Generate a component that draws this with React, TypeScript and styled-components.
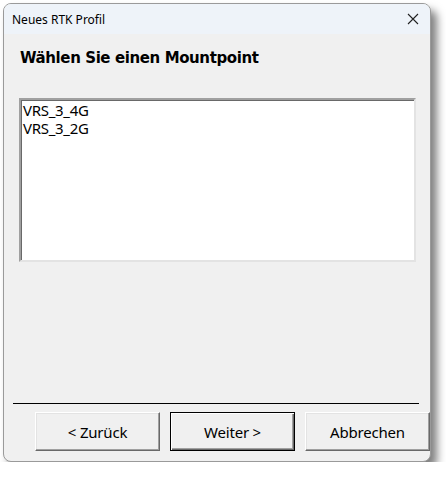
import styled, { createGlobalStyle } from 'styled-components';

const Global = createGlobalStyle`
    html, body {
        margin: 0;
        padding: 0;
        background: #ffffff;
    }
    body {
        padding: 3px 0 0 3px;
    }
`

const Window = styled.div`
    width: 428px;
    height: 459px;
    box-sizing: border-box;
    border: 1px solid #9a9a9a;
    border-radius: 8px;
    background: #f0f0f0;
    box-shadow: 6px 7px 8px rgba(0, 0, 0, 0.5);
    display: flex;
    flex-direction: column;
    overflow: hidden;
`
const Titlebar = styled.div`
    height: 30px;
    flex: none;
    background: #eef3f9;
    display: flex;
    align-items: center;
    justify-content: space-between;
    padding: 0 10px 0 8px;
    font-family: "Noto Sans", "Open Sans", sans-serif;
    font-size: 12px;
    color: #000;
`
const Close = styled.div`
    width: 14px;
    height: 14px;
    display: flex;
    align-items: center;
    justify-content: center;
`
const Content = styled.div`
    flex: 1;
    display: flex;
    flex-direction: column;
`
const Heading = styled.div`
    font-family: "DejaVu Sans", Tahoma, sans-serif;
    font-weight: bold;
    font-size: 15px;
    letter-spacing: -0.4px;
    color: #000;
    margin: 15px 0 0 16px;
    line-height: 18px;
`
const Listbox = styled.div`
    width: 397px;
    height: 164px;
    box-sizing: border-box;
    margin: 31px 0 0 15px;
    background: #fff;
    border-style: solid;
    border-width: 2px;
    border-color: #a0a0a0 #e3e3e3 #e3e3e3 #a0a0a0;
    box-shadow: inset 1px 1px 0 #696969;
    padding: 1px 2px;
    font-family: "Noto Sans", "Open Sans", sans-serif;
    font-size: 15px;
    letter-spacing: -0.3px;
    line-height: 18px;
    color: #000;
`
const Item = styled.div`
    padding-left: 0;
`
const Separator = styled.div`
    height: 1px;
    background: #000;
    margin: 141px 11px 0 9px;
`
const Buttons = styled.div`
    display: flex;
    gap: 10px;
    padding-left: 31px;
    margin-top: 8px;
`
const Button = styled.button<{ $default?: boolean }>`
    width: 125px;
    height: 39px;
    box-sizing: border-box;
    background: #f0f0f0;
    font-family: "Noto Sans", "Open Sans", sans-serif;
    font-size: 15px;
    letter-spacing: -0.2px;
    color: #000;
    padding: 0;
    border: 1px solid;
    border-color: ${p => (p.$default ? '#000' : '#fff #696969 #696969 #fff')};
    box-shadow: ${p => (p.$default
        ? 'inset 1px 1px 0 #fff, inset -1px -1px 0 #696969, inset -2px -2px 0 #a0a0a0'
        : 'inset -1px -1px 0 #a0a0a0, inset 1px 1px 0 #e3e3e3')};
`

export default function App() {
    return (
        <>
            <Global />
            <Window>
                <Titlebar>
                    <span>Neues RTK Profil</span>
                    <Close>
                        <svg width="12" height="12" viewBox="0 0 12 12">
                            <path d="M1 1 L11 11 M11 1 L1 11" stroke="#222" strokeWidth="1.1" />
                        </svg>
                    </Close>
                </Titlebar>
                <Content>
                    <Heading>Wählen Sie einen Mountpoint</Heading>
                    <Listbox>
                        <Item>VRS_3_4G</Item>
                        <Item>VRS_3_2G</Item>
                    </Listbox>
                    <Separator />
                    <Buttons>
                        <Button>&lt; Zurück</Button>
                        <Button $default>Weiter &gt;</Button>
                        <Button>Abbrechen</Button>
                    </Buttons>
                </Content>
            </Window>
        </>
    );
}
